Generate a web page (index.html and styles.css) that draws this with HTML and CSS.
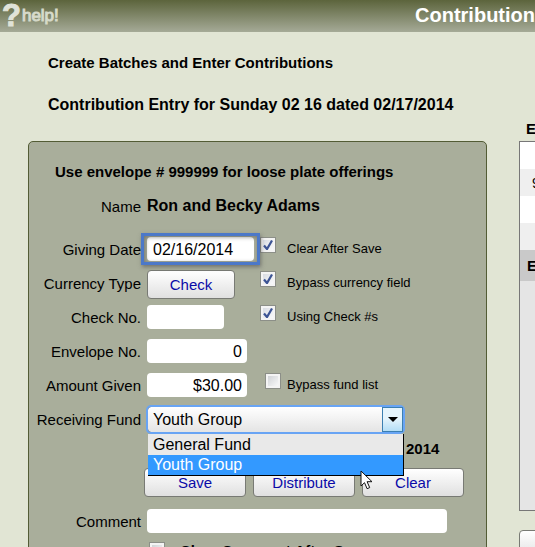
FILE: index.html
```html
<!DOCTYPE html>
<html lang="en">
<head>
<meta charset="utf-8">
<title>Contribution</title>
<link rel="stylesheet" href="styles.css">
</head>
<body>
<header class="topbar">
  <a class="help" href="#help"><span class="help-mark">?</span><span class="help-word">help!</span></a>
  <h1 class="page-title">Contribution</h1>
</header>
<div class="headings">
  <h2 class="section-title">Create Batches and Enter Contributions</h2>
  <h3 class="entry-title">Contribution Entry for Sunday 02 16 dated 02/17/2014</h3>
</div>
<main class="layout">
  <form class="panel">
    <p class="note">Use envelope # 999999 for loose plate offerings</p>
    <div class="row name-row">
      <span class="label">Name</span>
      <strong class="name">Ron and Becky Adams</strong>
    </div>
    <div class="row">
      <label class="label" for="date">Giving Date</label>
      <div class="control highlight"><input class="field" id="date" type="text" value="02/16/2014"></div>
      <label class="check"><span class="box-slot"><input class="box" type="checkbox" checked></span>Clear After Save</label>
    </div>
    <div class="row">
      <label class="label" for="currency">Currency Type</label>
      <div class="control"><button class="button currency" id="currency" type="button">Check</button></div>
      <label class="check"><span class="box-slot"><input class="box" type="checkbox" checked></span>Bypass currency field</label>
    </div>
    <div class="row">
      <label class="label" for="checkno">Check No.</label>
      <div class="control"><input class="field short" id="checkno" type="text"></div>
      <label class="check"><span class="box-slot"><input class="box" type="checkbox" checked></span>Using Check #s</label>
    </div>
    <div class="row">
      <label class="label" for="envelope">Envelope No.</label>
      <div class="control"><input class="field number" id="envelope" type="text" value="0"></div>
    </div>
    <div class="row">
      <label class="label" for="amount">Amount Given</label>
      <div class="control"><input class="field number" id="amount" type="text" value="$30.00"></div>
      <label class="check"><span class="box-slot end"><input class="box" type="checkbox"></span>Bypass fund list</label>
    </div>
    <div class="row">
      <label class="label" for="fund">Receiving Fund</label>
      <div class="wide combo">
        <select class="select" id="fund">
          <option>General Fund</option>
          <option selected>Youth Group</option>
        </select>
        <span class="arrow"><svg width="10" height="5" viewBox="0 0 10 5"><path d="M0 0h10L5 5z"/></svg></span>
        <ul class="menu">
          <li class="item">General Fund</li>
          <li class="item active">Youth Group</li>
        </ul>
        <svg class="cursor" width="13" height="20" viewBox="0 0 13 20"><path d="M1 1v15l3.500-3.300 2.600 6 2.600-1.100-2.600-5.900H12z" fill="#fff" stroke="#111" stroke-width="1"/></svg>
      </div>
    </div>
    <p class="year">2014</p>
    <div class="actions">
      <button class="button" type="button">Save</button>
      <button class="button" type="button">Distribute</button>
      <button class="button" type="button">Clear</button>
    </div>
    <div class="row">
      <label class="label" for="comment">Comment</label>
      <div class="wide"><input class="field comment" id="comment" type="text"></div>
    </div>
    <label class="after"><input class="box" type="checkbox">Clear Comment After Save</label>
  </form>
  <aside class="side">
    <h3 class="side-title">Envelope</h3>
    <table class="list">
      <tbody>
        <tr><td></td></tr>
        <tr><td>999999</td></tr>
        <tr><td></td></tr>
        <tr><td></td></tr>
        <tr class="subhead"><th>Envelope</th></tr>
        <tr class="rest"><td></td></tr>
      </tbody>
    </table>
    <button class="button side-button" type="button" aria-label="List action"></button>
  </aside>
</main>
</body>
</html>
```
FILE: styles.css
```css
* { box-sizing: border-box; }

html, body {
  margin: 0;
  height: 100%;
  overflow: hidden;
}

body {
  background: #e1e5d4;
  color: #000;
  font-family: "Liberation Sans", Arial, sans-serif;
  font-size: 15px;
}

h1, h2, h3, p, ul { margin: 0; padding: 0; }

.topbar {
  display: flex;
  justify-content: space-between;
  height: 32px;
  background: linear-gradient(#5c643c, #a5aa97);
}

.help {
  display: flex;
  align-items: center;
  padding-left: 2px;
  color: #e0e3d8;
  font-weight: bold;
  text-decoration: none;
}

.help-mark { font-size: 31px; line-height: 30px; -webkit-text-stroke: 1px #e0e3d8; }
.help-word { padding-left: 1px; font-size: 17px; line-height: 28px; font-weight: normal; -webkit-text-stroke: 1px #d4d8c8; }

.page-title {
  color: #fff;
  font-size: 20px;
  line-height: 30px;
  white-space: nowrap;
}

.headings { padding: 20px 48px 0; white-space: nowrap; }
.section-title { font-size: 15px; line-height: 22px; }
.entry-title { margin-top: 20px; font-size: 16px; line-height: 22px; }

.layout {
  display: flex;
  align-items: flex-start;
  gap: 32px;
  padding: 25px 0 0 28px;
}

.panel {
  flex: 1;
  min-width: 0;
  padding: 13px 0 24px;
  background: #a9ae9b;
  border: 1px solid #535c35;
  border-radius: 5px;
}

.note {
  padding-left: 26px;
  font-weight: bold;
  line-height: 34px;
  white-space: nowrap;
}

.row {
  display: grid;
  grid-template-columns: 112px 107px 1fr;
  column-gap: 6px;
  align-items: center;
  height: 34px;
}

.name-row { margin-bottom: 9px; }
.name { grid-column: 2 / -1; font-size: 16px; }
.label { text-align: right; white-space: nowrap; }
.wide { grid-column: 2 / -1; }

.field {
  display: block;
  width: 100%;
  height: 24px;
  padding: 1px 6px 0;
  border: 0;
  border-radius: 4px;
  background: #fff;
  color: #000;
  font: 16px "Liberation Sans", Arial, sans-serif;
}

.short { width: 77px; }
.number { width: 100px; padding-right: 5px; text-align: right; }
.comment { width: 300px; }

.highlight { position: relative; }
.highlight::after {
  content: "";
  position: absolute;
  inset: -4px -6px;
  border: 3px solid #4c78c8;
  box-shadow: 1px 2px 4px #555a, inset 1px 1px 4px #555a;
  pointer-events: none;
}

.check {
  display: flex;
  align-items: center;
  gap: 6px;
  height: 32px;
  margin-bottom: 2px;
  font-size: 13px;
  white-space: nowrap;
}

.box-slot { display: flex; width: 21px; padding-bottom: 6px; }
.end { justify-content: flex-end; }

.box {
  appearance: none;
  flex: none;
  width: 16px;
  height: 16px;
  margin: 0;
  border: 1px solid #8c8f88;
  background: linear-gradient(135deg, #c9ccd0, #fff);
  box-shadow: inset 0 0 0 2px #f4f4f4;
}

.box:checked {
  background: url('data:image/svg+xml,<svg xmlns="http://www.w3.org/2000/svg" viewBox="0 0 14 14"><path d="M3 7.500L6 11L11 2.500" fill="none" stroke="%233c5494" stroke-width="2.200"/></svg>'), linear-gradient(135deg, #d3d7df, #fff);
}

.button {
  height: 29px;
  padding: 0;
  border: 1px solid #787a74;
  border-radius: 4px;
  background: linear-gradient(#fff, #e0e0e0);
  color: #0a0aa8;
  font: 15px "Liberation Sans", Arial, sans-serif;
}

.currency { display: block; width: 88px; margin-top: 3px; }

.combo { position: relative; width: 257px; }

.select {
  appearance: none;
  display: block;
  width: 100%;
  height: 27px;
  padding: 0 5px;
  border: 1px solid #555;
  border-radius: 4px;
  outline: 2px solid #68a4f4;
  outline-offset: -1px;
  background: linear-gradient(#fff, #e4e4e4);
  color: #000;
  font: 16px "Liberation Sans", Arial, sans-serif;
}

.arrow {
  position: absolute;
  top: 1px;
  right: 1px;
  display: flex;
  align-items: center;
  justify-content: center;
  width: 21px;
  height: 25px;
  border: 1px solid #3c7fb1;
  background: linear-gradient(#e6f5fd 45%, #b4def6);
  pointer-events: none;
}

.menu {
  position: absolute;
  z-index: 1;
  top: 28px;
  left: 1px;
  right: 0;
  padding-top: 1px;
  border: solid #000;
  border-width: 0 1px 1px 0;
  background: #e9e9e9;
  list-style: none;
  font-size: 16px;
  line-height: 20px;
}

.item { padding-left: 5px; }
.active { background: #3399ff; color: #fff; }

.cursor { position: absolute; z-index: 2; left: 213px; top: 64px; }

.year {
  padding-left: 377px;
  font-weight: bold;
  line-height: 26px;
}

.actions {
  display: flex;
  gap: 7px;
  padding: 6px 0 7px 115px;
}

.actions .button { width: 102px; }

.after {
  display: flex;
  gap: 15px;
  padding: 4px 0 0 120px;
  font-weight: bold;
}

.side {
  flex: 0 0 16px;
  min-width: 0;
  margin-top: -22px;
  overflow: hidden;
}

.side-title {
  padding-left: 7px;
  font-size: 15px;
  line-height: 20px;
  margin-bottom: 2px;
}

.list {
  width: 120px;
  border: 1px solid #777;
  border-spacing: 0;
  background: #e5e5e5;
}

.list td, .list th {
  height: 27px;
  padding: 0 0 0 12px;
  background: #fff;
  font-size: 14px;
  text-align: left;
}

.list tr:nth-child(even) td { background: #efefef; }
.list .subhead th { height: 31px; padding-left: 7px; background: #c9c9c9; font-size: 15px; }
.list tr.rest td { height: 229px; background: #e5e5e5; }

.side-button { width: 90px; margin-top: 19px; }
```
